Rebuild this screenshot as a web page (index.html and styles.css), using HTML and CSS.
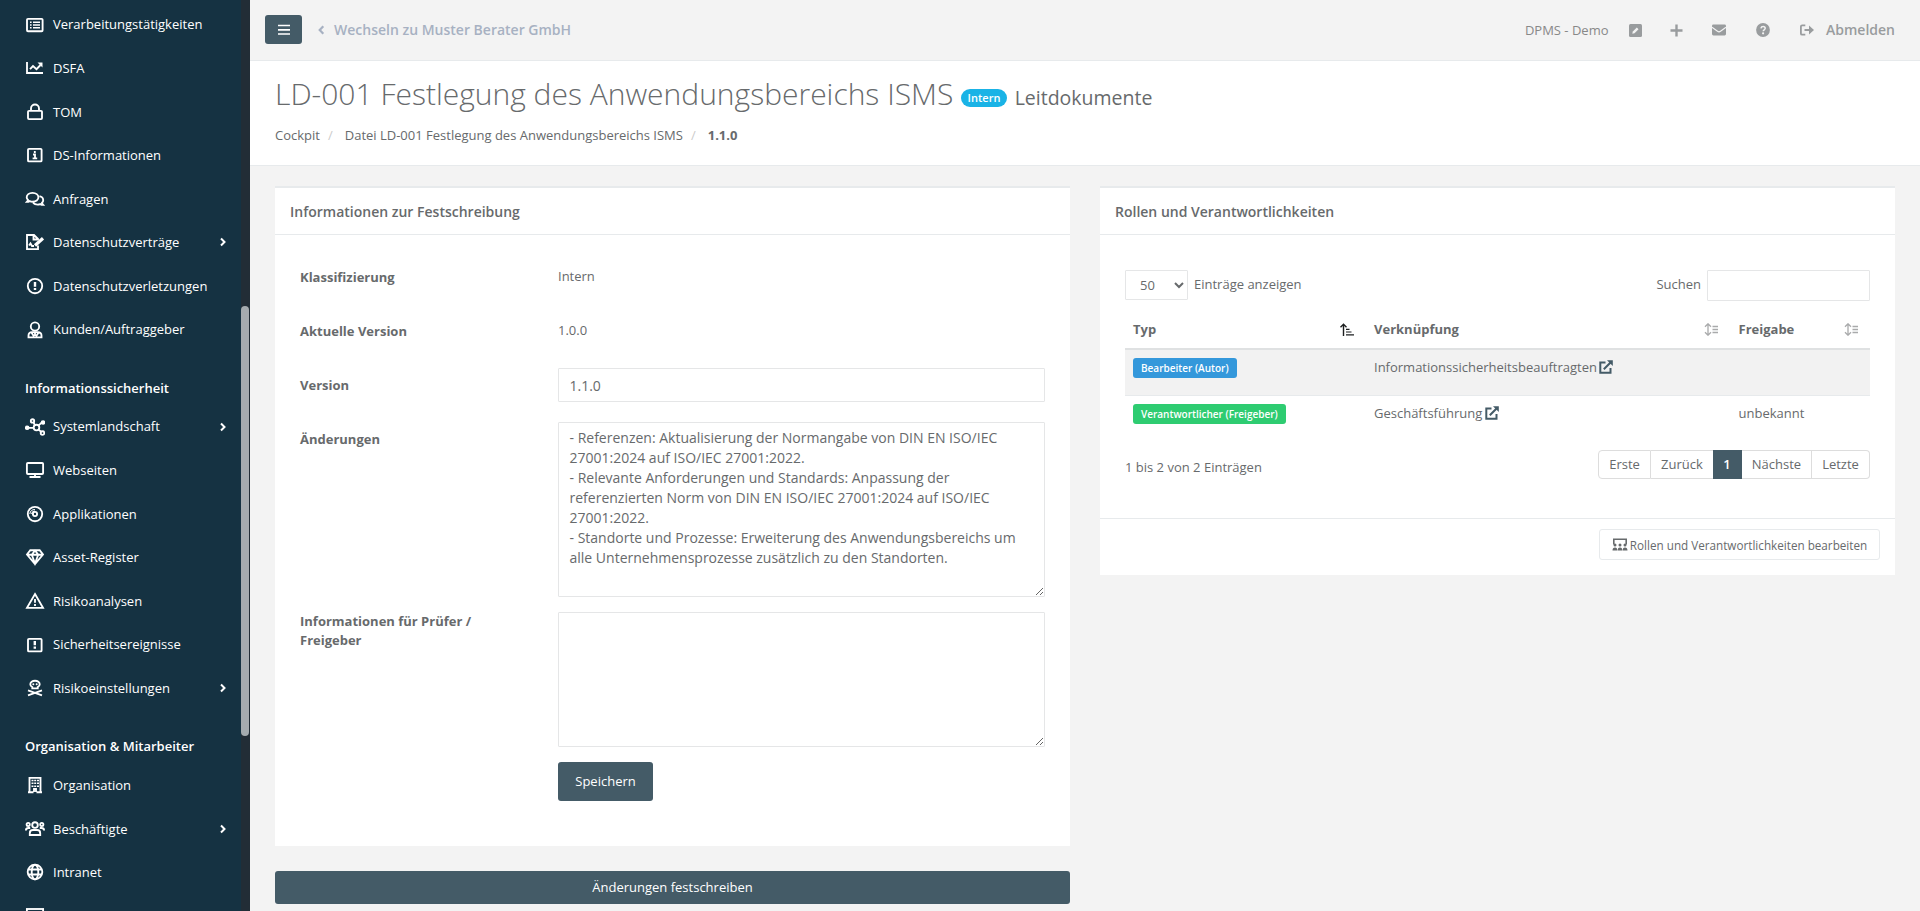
FILE: index.html
```html
<!DOCTYPE html>
<html lang="de">
<head>
<meta charset="utf-8">
<title>LD-001 Festlegung des Anwendungsbereichs ISMS</title>
<link rel="stylesheet" href="styles.css">
</head>
<body>
<div class="app">
  <aside class="sidebar">
    <nav class="menu">
      <a class="item"><svg class="ico" viewBox="0 0 20 18"><rect x="2" y="2.8" width="15.6" height="12.4" rx="1" /><path d="M5 6.2h1.6M8 6.2h7M5 9h1.6M8 9h7M5 11.8h1.6M8 11.8h7" stroke-width="1.500"/></svg>Verarbeitungstätigkeiten</a>
      <a class="item"><svg class="ico" viewBox="0 0 20 18"><path d="M2 3v11h16M5 10.200l3-3.200 3.500 3.200 4-4.200"/><path class="fill" d="M12.500 3.500h5v5z"/></svg>DSFA</a>
      <a class="item"><svg class="ico" viewBox="0 0 20 18"><rect x="3" y="7.800" width="14" height="8.300" rx="1"/><path d="M6 8V5.500a4 4 0 0 1 8 0V8"/></svg>TOM</a>
      <a class="item"><svg class="ico" viewBox="0 0 20 18"><rect x="3" y="2.800" width="13.600" height="12.600" rx="1"/><path d="M9.800 5v2M8 8.500h2v3.500M7.600 12.300h4.600"/></svg>DS-Informationen</a>
      <a class="item"><svg class="ico" viewBox="0 0 20 18"><path d="M7.500 2.800c3.500 0 5.900 2 5.900 4.500s-2.400 4.400-5.900 4.400c-1 0-2-.2-2.800-.6-.8.500-1.700.8-2.900.8.600-.6 1-1.300 1.200-2C2.200 9.200 1.700 8.300 1.700 7.300c0-2.500 2.300-4.500 5.800-4.500zM14.500 6.200c2.200.5 3.700 2.100 3.700 4 0 1-.4 1.900-1.200 2.600.2.800.6 1.500 1.200 2.100-1.200 0-2.200-.3-3-.8-.8.300-1.700.5-2.600.5-1.900 0-3.500-.7-4.500-1.800"/></svg>Anfragen</a>
      <a class="item"><svg class="ico" viewBox="0 0 20 18"><path d="M13 12.500v3.600H2V2h7l4 4v1M8.500 2v4.500H13M4 12.500l1.500-2 1.500 2.500h2"/><path d="M10 12.500l8-7.300" stroke-width="3.200"/></svg>Datenschutzverträge<svg class="chev" viewBox="0 0 8 10"><path d="M2 1.500 5.500 5 2 8.500"/></svg></a>
      <a class="item"><svg class="ico" viewBox="0 0 20 18"><circle cx="10" cy="9" r="7.200"/><path d="M10 5v4.800M10 11v2" stroke-width="2.400"/></svg>Datenschutzverletzungen</a>
      <a class="item"><svg class="ico" viewBox="0 0 20 18"><circle cx="10" cy="5.500" r="4.200"/><path d="M3.500 16.300v-1.500c0-2.200 1.600-3.700 3.500-3.700h6c1.900 0 3.500 1.500 3.500 3.700v1.500zM6.500 11.500l2.500 4M13.500 11.500l-2.500 4M10 11v4"/></svg>Kunden/Auftraggeber</a>
      <h4 class="group">Informationssicherheit</h4>
      <a class="item"><svg class="ico" viewBox="0 0 20 18"><circle cx="11.500" cy="9.500" r="2.800"/><circle cx="7.500" cy="2.900" r="1.700"/><circle cx="17.500" cy="15" r="1.800"/><path d="M8.500 4.300l1.500 3M2 9.800h6.500M13.600 7.400l4-3.500M13.500 11.600l2.700 2.200"/><circle class="fill" cx="2.200" cy="9.800" r="2.300"/><circle class="fill" cx="18" cy="4.500" r="2.300"/></svg>Systemlandschaft<svg class="chev" viewBox="0 0 8 10"><path d="M2 1.500 5.500 5 2 8.500"/></svg></a>
      <a class="item"><svg class="ico" viewBox="0 0 20 18"><rect x="1.900" y="2" width="16.200" height="11" rx="1"/><path d="M10 13v2.500M4.500 16h11"/></svg>Webseiten</a>
      <a class="item"><svg class="ico" viewBox="0 0 20 18"><circle cx="10" cy="9" r="7.200"/><circle cx="10" cy="9" r="2.100"/><path d="M4.800 9A5.200 5.200 0 0 1 10 4.500M6.500 9A3.500 3.500 0 0 1 10 6" stroke-width="1"/></svg>Applikationen</a>
      <a class="item"><svg class="ico" viewBox="0 0 20 18"><path d="M5.300 2.200h9.400l3.300 4.300-8 9.500L2 6.500zM2 6.700h16M6.800 6.700 10 2.500l3.200 4.200L10 15.500z"/></svg>Asset-Register</a>
      <a class="item"><svg class="ico" viewBox="0 0 20 18"><path d="M10 2 18 15.800H2zM10 7v3.800M10 12v2"/></svg>Risikoanalysen</a>
      <a class="item"><svg class="ico" viewBox="0 0 20 18"><rect x="3" y="2.800" width="13.600" height="12.600" rx="1"/><path d="M9.800 5v4.300M9.800 10.500v2.300" stroke-width="2.400"/></svg>Sicherheitsereignisse</a>
      <a class="item"><svg class="ico" viewBox="0 0 20 18"><path d="M7.300 9.300v-1.200C6 7.400 5.300 6.400 5.300 5.200 5.300 3.200 7.300 1.700 10 1.700s4.700 1.500 4.700 3.500c0 1.200-.7 2.200-2 2.900v1.200zM3 11.300l14 5M17 11.300l-14 5"/><circle class="fill" cx="8.300" cy="5.300" r="1"/><circle class="fill" cx="11.700" cy="5.300" r="1"/></svg>Risikoeinstellungen<svg class="chev" viewBox="0 0 8 10"><path d="M2 1.500 5.500 5 2 8.500"/></svg></a>
      <h4 class="group">Organisation &amp; Mitarbeiter</h4>
      <a class="item"><svg class="ico" viewBox="0 0 20 18"><path d="M4.500 16V1.900h11V16M3 16.200h5.500M11.500 16.200H17M9 16v-3h2v3"/><path d="M6.500 4.500h2M9.200 4.500h2M12 4.500h2M6.500 7.300h2M9.200 7.300h2M12 7.300h2M6.500 10.200h2M9.200 10.200h2M12 10.200h2" stroke-width="1.600"/></svg>Organisation</a>
      <a class="item"><svg class="ico" viewBox="0 0 20 18"><circle cx="10" cy="5" r="2.800"/><circle cx="3.200" cy="4.500" r="1.600"/><circle cx="16.800" cy="4.500" r="1.600"/><path d="M4.800 15v-1.800C4.800 11.300 6 10 7.800 10h4.400c1.800 0 3 1.300 3 3.200V15zM.9 10.500c0-1.500.8-2.500 2.500-2.500h1.800M19.100 10.500c0-1.500-.8-2.500-2.500-2.500h-1.800"/></svg>Beschäftigte<svg class="chev" viewBox="0 0 8 10"><path d="M2 1.500 5.500 5 2 8.500"/></svg></a>
      <a class="item"><svg class="ico" viewBox="0 0 20 18"><circle cx="10" cy="9" r="7.300"/><ellipse cx="10" cy="9" rx="3.300" ry="7.300"/><path d="M3 6.500h14M3 11.500h14"/></svg>Intranet</a>
      <a class="item"><svg class="ico" viewBox="0 0 20 18"><rect x="1.900" y="2" width="16.200" height="11"/></svg></a>
    </nav>
    <div class="track"><div class="thumb"></div></div>
  </aside>

  <main class="main">
    <header class="topbar">
      <button class="burger"><svg width="12" height="12" viewBox="0 0 12 12"><path d="M0 1.500h12M0 5.800h12M0 10h12" stroke="#fff" stroke-width="1.700"/></svg></button>
      <a class="switch"><svg width="7" height="10" viewBox="0 0 7 10"><path d="M5.300 1.200 1.700 5l3.600 3.800" fill="none" stroke="#a7b1c2" stroke-width="2.200"/></svg><span>Wechseln zu Muster Berater GmbH</span></a>
      <div class="tools">
        <span class="client">DPMS - Demo</span>
        <svg class="t-pen" width="13" height="13" viewBox="0 0 13 13"><rect width="13" height="13" rx="1.500" fill="currentColor"/><path d="M3.300 9.700l.5-2.200 4-4 1.700 1.700-4 4z" fill="#f3f3f3"/></svg>
        <svg class="t-plus" width="13" height="13" viewBox="0 0 13 13"><path d="M6.500.5v12M.5 6.500h12" stroke="currentColor" stroke-width="2.400"/></svg>
        <svg class="t-mail" width="14" height="12" viewBox="0 0 14 12"><rect y=".5" width="14" height="11" rx="1.400" fill="currentColor"/><path d="M0 3.300l5.500 4c1 .7 2 .7 3 0l5.500-4" fill="none" stroke="#f3f3f3" stroke-width="1.100"/></svg>
        <svg class="t-help" width="14" height="14" viewBox="0 0 14 14"><circle cx="7" cy="7" r="6.900" fill="currentColor"/><path d="M4.900 5.300c.3-1.300 1.100-1.800 2.200-1.800 1.200 0 2.100.8 2.100 1.800 0 1.500-2 1.500-2 2.900" fill="none" stroke="#f3f3f3" stroke-width="1.500"/><circle cx="7.100" cy="10.300" r="1.100" fill="#f3f3f3"/></svg>
        <a class="logout"><svg width="14" height="12" viewBox="0 0 14 12"><path d="M5.300 1.300H2.200c-.8 0-1.300.5-1.300 1.300v6.800c0 .8.500 1.300 1.300 1.300h3.100M4.500 6H10" fill="none" stroke="currentColor" stroke-width="1.800"/><path d="M9 1.500 14 6l-5 4.500z" fill="currentColor"/></svg><span>Abmelden</span></a>
      </div>
    </header>

    <section class="heading">
      <h2>LD-001 Festlegung des Anwendungsbereichs ISMS <span class="pill">Intern</span> <small>Leitdokumente</small></h2>
      <ol class="crumbs"><li>Cockpit</li><li>Datei LD-001 Festlegung des Anwendungsbereichs ISMS</li><li><b>1.1.0</b></li></ol>
    </section>

    <div class="columns">
      <div class="col">
        <section class="card card-form">
          <h5>Informationen zur Festschreibung</h5>
          <form class="form">
            <label>Klassifizierung</label><div class="static">Intern</div>
            <label>Aktuelle Version</label><div class="static">1.0.0</div>
            <label>Version</label><input class="field version" value="1.1.0">
            <label>Änderungen</label><textarea class="field changes">- Referenzen: Aktualisierung der Normangabe von DIN EN ISO/IEC 27001:2024 auf ISO/IEC 27001:2022.
- Relevante Anforderungen und Standards: Anpassung der referenzierten Norm von DIN EN ISO/IEC 27001:2024 auf ISO/IEC 27001:2022.
- Standorte und Prozesse: Erweiterung des Anwendungsbereichs um alle Unternehmensprozesse zusätzlich zu den Standorten.</textarea>
            <label class="flush">Informationen für Prüfer / Freigeber</label><textarea class="field info"></textarea>
            <button class="primary save" type="button">Speichern</button>
          </form>
        </section>
        <button class="primary commit">Änderungen festschreiben</button>
      </div>

      <div class="col">
        <section class="card card-roles">
          <h5>Rollen und Verantwortlichkeiten</h5>
          <div class="roles">
            <div class="filters">
              <div class="length"><select class="field"><option>50</option></select><span>Einträge anzeigen</span></div>
              <div class="search"><span>Suchen</span><input class="field"></div>
            </div>
            <table class="grid">
              <colgroup><col class="c-type"><col class="c-link"><col class="c-rel"></colgroup>
              <thead><tr>
                <th><div>Typ<svg width="14" height="13" viewBox="0 0 14 13"><path d="M3.500 13V1.500M.5 4.200l3-3 3 3" fill="none" stroke="#1d1f20" stroke-width="1.400"/><path d="M6 6.300h3.500M6 9h5.500M6 11.800h8" stroke="#1d1f20" stroke-width="1.200"/></svg></div></th>
                <th><div>Verknüpfung<svg width="14" height="13" viewBox="0 0 14 13"><path d="M4 1.200v10.600M1 3.800l3-3 3 3M1 9.200l3 3 3-3" fill="none" stroke="#a9aaab" stroke-width="1.300"/><path d="M8.500 3.500H14M8.500 6.500H14M8.500 9.500H14" stroke="#a9aaab" stroke-width="1.300"/></svg></div></th>
                <th><div>Freigabe<svg width="14" height="13" viewBox="0 0 14 13"><path d="M4 1.200v10.600M1 3.800l3-3 3 3M1 9.200l3 3 3-3" fill="none" stroke="#a9aaab" stroke-width="1.300"/><path d="M8.500 3.500H14M8.500 6.500H14M8.500 9.500H14" stroke="#a9aaab" stroke-width="1.300"/></svg></div></th>
              </tr></thead>
              <tbody>
                <tr><td><span class="tag blue">Bearbeiter (Autor)</span></td><td>Informationssicherheitsbeauftragten <svg class="ext" width="14" height="14" viewBox="0 0 14 14"><path d="M6.500 2.500H1.300v10.200h10.200V8M4.800 9.200l7-7" fill="none" stroke="#445b67" stroke-width="2"/><path d="M8 .3h5.800v5.800z" fill="#445b67"/></svg></td><td></td></tr>
                <tr><td><span class="tag green">Verantwortlicher (Freigeber)</span></td><td>Geschäftsführung <svg class="ext" width="14" height="14" viewBox="0 0 14 14"><path d="M6.500 2.500H1.300v10.200h10.200V8M4.800 9.200l7-7" fill="none" stroke="#445b67" stroke-width="2"/><path d="M8 .3h5.800v5.800z" fill="#445b67"/></svg></td><td>unbekannt</td></tr>
              </tbody>
            </table>
            <div class="pager">
              <span>1 bis 2 von 2 Einträgen</span>
              <ul><li class="p1">Erste</li><li class="p2">Zurück</li><li class="p3 active">1</li><li class="p4">Nächste</li><li class="p5">Letzte</li></ul>
            </div>
          </div>
          <footer><button class="ghost"><svg width="16" height="13" viewBox="0 0 16 13"><path d="M1.800 6.500V1.200h12.400v5.300" fill="none" stroke="#676a6c" stroke-width="1.600"/><g fill="#676a6c"><circle cx="3" cy="7" r="1.500"/><circle cx="8" cy="7" r="1.500"/><circle cx="13" cy="7" r="1.500"/><path d="M.5 12.500c0-2 .8-3 2.500-3s2.300 1 2.300 3zM5.700 12.500c0-2 .6-3 2.300-3s2.300 1 2.300 3zM10.700 12.500c0-2 .6-3 2.300-3s2.500 1 2.500 3z"/></g></svg>Rollen und Verantwortlichkeiten bearbeiten</button></footer>
        </section>
      </div>
    </div>
  </main>
</div>
</body>
</html>
```

FILE: styles.css
```css
* { box-sizing: border-box; }
body {
  margin: 0;
  font: 13px/18.57px "Open Sans", "Noto Sans", sans-serif;
  color: #676a6c;
  background: #f3f3f3;
  overflow: hidden;
}
h2, h4, h5, ol, ul { margin: 0; padding: 0; list-style: none; }
button, input, select, textarea { font-family: inherit; color: inherit; margin: 0; }

.app { display: flex; height: 911px; overflow: hidden; }

/* Sidebar */
.sidebar { width: 250px; flex: none; display: flex; background: #153242; overflow: hidden; }
.menu { flex: 1; padding-top: 2.9px; }
.item {
  display: flex;
  align-items: center;
  height: 43.57px;
  padding: 0 14px 0 25px;
  color: #fff;
}
.ico {
  width: 20px;
  height: 18px;
  margin-right: 8px;
  fill: none;
  stroke: #fff;
  stroke-width: 1.85;
}
.ico .fill { fill: #fff; stroke: none; }
.chev { width: 8px; height: 10px; margin-left: auto; fill: none; stroke: #fff; stroke-width: 2; }
.group {
  height: 53.57px;
  padding: 27.500px 0 0 25px;
  font-size: 13px;
  line-height: 18.57px;
  font-weight: 600;
  color: #fff;
}
.track { width: 9px; background: #222d36; padding: 306px 1px 0 0; }
.thumb { height: 430px; border-radius: 4px; background: #a5abaf; }

/* Top bar */
.main { flex: 1; min-width: 0; }
.topbar {
  display: flex;
  align-items: flex-start;
  height: 61px;
  border-bottom: 1px solid #e7eaec;
  padding: 15px 25px 0 15px;
}
.burger {
  display: flex;
  align-items: center;
  justify-content: center;
  width: 37px;
  height: 29px;
  border: 0;
  padding: 0;
  border-radius: 3px;
  background: #445b67;
}
.switch {
  display: flex;
  align-items: center;
  gap: 9px;
  height: 30px;
  margin-left: 16px;
  font-size: 14px;
  font-weight: 600;
  color: #a7b1c2;
}
.tools { display: flex; align-items: center; height: 30px; margin-left: auto; color: #999c9e; }
.client { color: #888; }
.t-pen { margin-left: 20px; }
.t-plus { margin-left: 28px; }
.t-mail { margin-left: 29px; }
.t-help { margin-left: 30px; }
.logout { display: flex; align-items: center; gap: 12px; margin-left: 30.5px; font-size: 14px; font-weight: 600; }

/* Page heading */
.heading { height: 105px; padding: 15px 25px 0; background: #fff; border-bottom: 1px solid #e7eaec; }
.heading h2 { height: 36px; font-size: 30px; line-height: 36px; font-weight: 300; white-space: nowrap; }
.pill {
  display: inline-block;
  vertical-align: 3.500px;
  height: 18px;
  padding: 0 6.5px;
  border-radius: 9px;
  background: #1ab3e6;
  color: #fff;
  font-size: 11px;
  line-height: 17px;
  font-weight: 600;
}
.heading small { font-size: 19.5px; font-weight: 400; }
.crumbs { display: flex; margin-top: 14px; }
.crumbs li + li::before { content: "/"; padding: 0 12px 0 8px; color: #ccc; }

/* Cards */
.columns { display: grid; grid-template-columns: 795px 795px; gap: 30px; padding: 20px 25px 0; }
.card { background: #fff; border-top: 2px solid #e7eaec; }
.card h5 {
  height: 47px;
  padding: 14px 15px 0;
  border-bottom: 1px solid #e7eaec;
  font-size: 14px;
  line-height: 20px;
  font-weight: 600;
}
.card-form { height: 660px; }
.form {
  display: grid;
  grid-template-columns: 258px 487px;
  grid-template-rows: 54px 54px 54px 190px 150px 39px;
  align-items: start;
  padding: 25px 25px 0;
}
.form label { width: 200px; padding-top: 7.500px; line-height: 19px; font-weight: 700; }
.form label.flush { padding-top: 0; }
.static { padding-top: 6.500px; }
.field {
  border: 1px solid #e5e6e7;
  border-radius: 1px;
  background: #fff;
  font-size: 14px;
  line-height: 20px;
  padding: 4.900px 10.5px;
  outline: 0;
}
.version { height: 34px; }
.changes { height: 175px; }
.info { height: 135px; }
.form .version, .form .changes, .form .info { width: 487px; }
.primary { border: 0; border-radius: 3px; background: #445b67; color: #fff; font-size: 13px; padding: 0 0 2px; }
.save { grid-column: 2; width: 95px; height: 39px; }
.commit { display: block; width: 100%; height: 33px; margin-top: 25px; }

/* Roles */
.card-roles { height: 389px; }
.roles { height: 283px; padding: 35px 25px 0; }
.filters { display: flex; justify-content: space-between; height: 31px; }
.length, .search { display: flex; gap: 6px; }
.length span, .search span { line-height: 29px; }
.length select { width: 63px; height: 30px; padding: 0 0 0 10px; font-size: 13px; }
.search input { width: 163px; height: 31px; }
.grid { width: 745px; margin-top: 9px; border-collapse: collapse; table-layout: fixed; }
.c-type { width: 241px; }
.c-link { width: 364.5px; }
.c-rel { width: 139.5px; }
.grid th { height: 39px; padding: 0 12px 0 8px; border-bottom: 2px solid #dfe1e2; text-align: left; }
.grid th:nth-child(2) { padding-right: 13px; }
.grid th div { display: flex; align-items: center; justify-content: space-between; }
.grid td { height: 46px; padding: 8px; vertical-align: top; white-space: nowrap; }
.grid tbody tr:first-child { background: #f2f2f2; border-bottom: 1px solid #e7eaec; }
.tag {
  display: inline-block;
  height: 20px;
  padding: 0 8px;
  border-radius: 3px;
  color: #fff;
  font-size: 10px;
  line-height: 20px;
  font-weight: 600;
}
.blue { background: #3498db; }
.green { background: #2ecc71; }
.ext { margin-left: -1px; vertical-align: -2px; }
.pager { display: flex; justify-content: space-between; margin-top: 9px; }
.pager > span { line-height: 35px; }
.pager ul { display: flex; height: 29px; }
.pager li {
  border: 1px solid #ddd;
  border-left-width: 0;
  text-align: center;
  line-height: 27px;
}
.pager .p1 { width: 53px; border-left-width: 1px; border-radius: 4px 0 0 4px; }
.pager .p2 { width: 62px; border-right: 0; }
.pager .p3 { width: 29px; }
.pager .p4 { width: 70px; }
.pager .p5 { width: 58px; border-radius: 0 4px 4px 0; }
.pager .active { border-color: #445b67; background: #445b67; color: #fff; font-weight: 600; }
.card-roles footer { display: flex; justify-content: flex-end; padding: 10px 15px; border-top: 1px solid #e7eaec; }
.ghost {
  display: flex;
  align-items: center;
  justify-content: center;
  gap: 2px;
  width: 281px;
  height: 31px;
  padding: 0;
  border: 1px solid #e7eaec;
  border-radius: 3px;
  background: #fff;
  font-size: 11.7px;
}
```
